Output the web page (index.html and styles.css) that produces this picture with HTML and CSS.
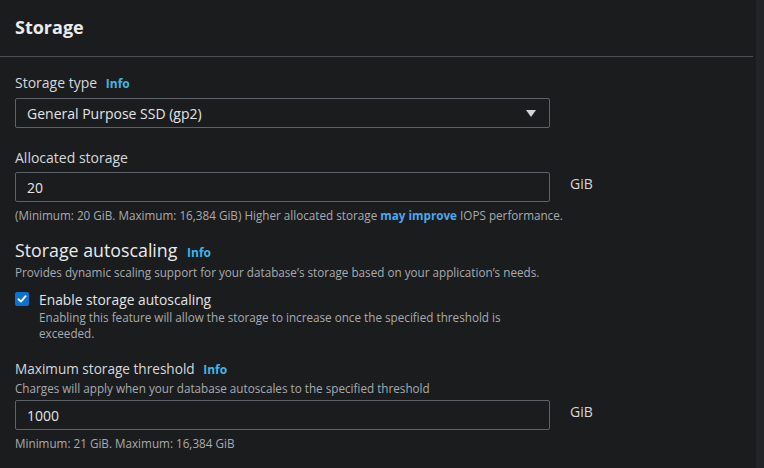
FILE: index.html
```html
<!DOCTYPE html>
<html lang="en">
<head>
<meta charset="utf-8">
<title>Storage</title>
<link rel="stylesheet" href="styles.css">
</head>
<body>
<div class="page">
  <main class="panel">
    <header class="panel-header"><h2>Storage</h2></header>
    <div class="panel-body">
      <div class="field field-type">
        <div class="label">Storage type <span class="info">Info</span></div>
        <div class="select">
          <span>General Purpose SSD (gp2)</span>
          <svg class="caret" width="12" height="9" viewBox="0 0 12 9"><path d="M1 1 L11 1 L6 8 Z" fill="#d1d5db"/></svg>
        </div>
      </div>

      <div class="field field-alloc">
        <div class="label">Allocated storage</div>
        <div class="input-row">
          <div class="input">20</div>
          <span class="unit">GiB</span>
        </div>
        <div class="hint">(Minimum: 20 GiB. Maximum: 16,384 GiB) Higher allocated storage <a class="link">may improve</a> IOPS performance.</div>
      </div>

      <div class="section">
        <h3 class="section-title">Storage autoscaling <span class="info">Info</span></h3>
        <div class="desc">Provides dynamic scaling support for your database’s storage based on your application’s needs.</div>
        <div class="check">
          <span class="box"><svg width="10" height="10" viewBox="0 0 10 10"><path d="M1.5 5.2 L4 7.6 L8.6 2.2" fill="none" stroke="#fff" stroke-width="1.9" stroke-linecap="round" stroke-linejoin="round"/></svg></span>
          <div class="check-text">
            <div class="check-label">Enable storage autoscaling</div>
            <div class="check-desc">Enabling this feature will allow the storage to increase once the specified threshold is exceeded.</div>
          </div>
        </div>
      </div>

      <div class="field field-max">
        <div class="label label-max">Maximum storage threshold <span class="info">Info</span></div>
        <div class="desc">Charges will apply when your database autoscales to the specified threshold</div>
        <div class="input-row">
          <div class="input">1000</div>
          <span class="unit">GiB</span>
        </div>
        <div class="hint">Minimum: 21 GiB. Maximum: 16,384 GiB</div>
      </div>
    </div>
  </main>
  <aside class="strip"></aside>
</div>
</body>
</html>
```

FILE: styles.css
```css
* { box-sizing: border-box; }
html, body { margin: 0; padding: 0; }
body {
  background: #1b1c1e;
  color: #d1d5db;
  font-family: "Open Sans", "Noto Sans", sans-serif;
  width: 764px;
  height: 468px;
  overflow: hidden;
}
.page { display: flex; height: 468px; }
.panel { width: 753px; }
.strip { margin-left: 3px; width: 8px; background: #222427; }

.panel-header {
  height: 57px;
  border-bottom: 1px solid #4a4d52;
  padding: 14px 15px 0;
}
.panel-header h2 {
  margin: 0;
  font-size: 18px;
  font-weight: 700;
  color: #e9ebed;
  line-height: 26px;
}
.panel-body { padding: 16px 15px 0; }

.label {
  font-size: 14px;
  color: #d5d8dc;
  line-height: 20px;
}
.label-max { font-size: 13.6px; }
.info {
  color: #3fb5e6;
  font-weight: 700;
  font-size: 12px;
  margin-left: 5px;
}
.select, .input {
  width: 535px;
  height: 30px;
  border: 1px solid #5f6369;
  border-radius: 2px;
  display: flex;
  align-items: center;
  padding: 0 11px;
  font-size: 14px;
  color: #e2e4e7;
}
.select { justify-content: space-between; margin-top: 4px; }
.caret { margin-right: 1px; }

.field-alloc { margin-top: 20px; }
.field-alloc .input-row { margin-top: 4px; }
.input-row { display: flex; align-items: center; }
.unit { margin-left: 20px; font-size: 14px; color: #d5d8dc; margin-top: -7px; }
.hint { font-size: 11.7px; color: #a7abb0; line-height: 16px; margin-top: 5px; }
.link { color: #49a8f0; font-weight: 700; }

.section { margin-top: 16px; }
.section-title {
  margin: 0;
  font-size: 17.8px;
  font-weight: 400;
  color: #e9ebed;
  line-height: 23px;
}
.section-title .info { font-size: 12px; }
.desc { font-size: 11.7px; color: #a7abb0; line-height: 16px; }

.check { display: flex; margin-top: 12px; }
.box {
  width: 14px; height: 14px;
  background: #0972d3;
  border-radius: 2px;
  display: flex; align-items: center; justify-content: center;
  margin-top: 0px;
  flex-shrink: 0;
}
.check-text { margin-left: 10px; width: 500px; }
.check-label { font-size: 13.8px; color: #e2e4e7; line-height: 16px; }
.check-desc { font-size: 11.7px; color: #a7abb0; line-height: 16px; margin-top: 1px; }

.field-max { margin-top: 18px; }
.field-max .input-row { margin-top: 4px; }
.field-max .hint { margin-top: 5px; }
```
